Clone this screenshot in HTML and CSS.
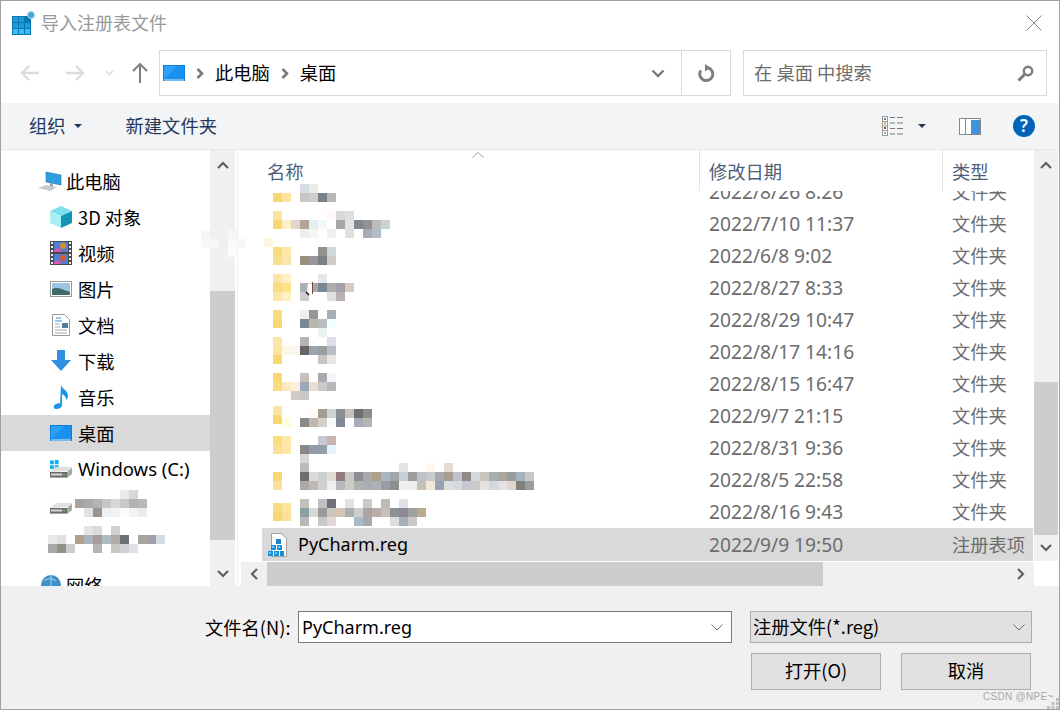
FILE: index.html
```html
<!DOCTYPE html>
<html lang="zh-CN">
<head>
<meta charset="utf-8">
<title>导入注册表文件</title>
<link rel="stylesheet" href="styles.css">
</head>
<body>
<div class="window">
  <header class="titlebar">
    <svg class="title-icon" width="24" height="24" viewBox="0 0 24 24"><rect x="0" y="5" width="19" height="19" fill="#0b76b4"/><g fill="#1d9ad8"><rect x="1" y="6" width="5" height="5"/><rect x="7" y="6" width="5" height="5"/><rect x="1" y="12" width="5" height="5"/><rect x="7" y="12" width="5" height="5"/><rect x="13" y="12" width="5" height="5"/></g><g fill="#36bdf2"><rect x="1" y="18" width="5" height="5"/><rect x="7" y="18" width="5" height="5"/><rect x="13" y="18" width="5" height="5"/></g><circle cx="19" cy="4" r="3.500" fill="#45a6d8" stroke="#a8d8ee"/></svg>
    <span class="title-text">导入注册表文件</span>
    <svg class="close" width="16" height="16" viewBox="0 0 16 16"><path d="M.5.5l15 15M15.5.5l-15 15" stroke="#8a8a8a" fill="none"/></svg>
  </header>

  <nav class="navbar">
    <svg class="nav-back" width="19" height="16" viewBox="0 0 19 16"><path d="M9 1L2 8l7 7M2 8h17" stroke="#dcdcdc" stroke-width="2.400" fill="none"/></svg>
    <svg class="nav-fwd" width="19" height="16" viewBox="0 0 19 16"><path d="M10 1l7 7-7 7M17 8H0" stroke="#dcdcdc" stroke-width="2.400" fill="none"/></svg>
    <svg class="nav-drop" width="9" height="6" viewBox="0 0 9 6"><path d="M1 1l3.500 3.500L8 1" stroke="#dcdcdc" stroke-width="1.600" fill="none"/></svg>
    <svg class="nav-up" width="16" height="20" viewBox="0 0 16 20"><path d="M1 8l7-7 7 7M8 1v19" stroke="#7f7f7f" stroke-width="2" fill="none"/></svg>
    <div class="address">
      <svg class="addr-icon" width="22" height="16" viewBox="0 0 22 16"><use href="#desk"/></svg>
      <svg class="crumb-sep" width="8" height="11" viewBox="0 0 8 11"><path d="M1.500 1l4.500 4.500L1.500 10" stroke="#7a7a7a" stroke-width="2.600" fill="none"/></svg>
      <span class="crumb">此电脑</span>
      <svg class="crumb-sep" width="8" height="11" viewBox="0 0 8 11"><path d="M1.500 1l4.500 4.500L1.500 10" stroke="#7a7a7a" stroke-width="2.600" fill="none"/></svg>
      <span class="crumb">桌面</span>
      <svg class="addr-chev" width="14" height="9" viewBox="0 0 14 9"><path d="M1.500 1.500L7 7l5.500-5.500" stroke="#7a7a7a" stroke-width="2.400" fill="none"/></svg>
      <div class="addr-refresh">
        <svg width="17" height="18" viewBox="0 0 17 18"><path d="M10 3.800A6.500 6.500 0 1 1 2.800 6.500" stroke="#7f7f7f" stroke-width="3" fill="none"/><path d="M7 0l5.500 3.800L7 7.500z" fill="#7f7f7f"/></svg>
      </div>
    </div>
    <div class="search">
      <span class="search-text">在 桌面 中搜索</span>
      <svg width="17" height="17" viewBox="0 0 17 17"><circle cx="11" cy="6" r="4.200" stroke="#7a7a7a" stroke-width="2.400" fill="none"/><path d="M7.500 9.500L1.500 15.500" stroke="#7a7a7a" stroke-width="3"/></svg>
    </div>
  </nav>

  <div class="toolbar">
    <span class="tool">组织</span><i class="caret"></i>
    <span class="tool tool-new">新建文件夹</span>
    <svg class="views" width="22" height="20" viewBox="0 0 22 20"><rect x=".5" y=".5" width="5" height="19" fill="#fff" stroke="#9a9a9a"/><path d="M1 5.500h4M1 10h4M1 14.500h4" stroke="#9a9a9a"/><rect x="2" y="2" width="2" height="2" fill="#4a7fb0"/><rect x="2" y="6.500" width="2" height="2" fill="#b8a040"/><rect x="2" y="11" width="2" height="2" fill="#b03020"/><rect x="2" y="16" width="2" height="2" fill="#a0a0a0"/><path d="M8 1.500h5M15 1.500h6M8 7h5M15 7h6M8 12.500h5M15 12.500h6M8 18h5M15 18h6" stroke="#777"/></svg>
    <i class="caret caret-views"></i>
    <svg class="pane" width="22" height="17" viewBox="0 0 22 17"><rect x=".5" y=".5" width="21" height="16" fill="#fff" stroke="#8a8a8a"/><rect x="12" y="2" width="9" height="14" fill="#3f92dc"/><path d="M6.500 1v15" stroke="#8a8a8a"/></svg>
    <svg class="help" width="22" height="22" viewBox="0 0 22 22"><circle cx="11" cy="11" r="11" fill="#0063b8"/><text x="11" y="17" class="help-q">?</text></svg>
  </div>

  <main class="content">
    <aside class="tree">
      <div class="tree-item tree-root"><svg class="ti" width="24" height="20" viewBox="0 0 24 20"><path d="M8 1l15 3v10L8 11z" fill="#2ea0e0" stroke="#1a78b0" stroke-width=".6"/><path d="M0 17l8-3 11 2-7 4z" fill="#c8ccd0"/><path d="M12 12l3 .6v3l-3-.4z" fill="#9aa4aa"/></svg><span>此电脑</span></div>
      <div class="tree-item"><svg class="ti" width="22" height="22" viewBox="0 0 22 22"><path d="M0 5l11 5 11-5-11-5z" fill="#7fe0ee"/><path d="M0 5l11 5v12L0 17z" fill="#a8eef2"/><path d="M11 10l11-5v12l-11 5z" fill="#1296b8"/></svg><span>3D 对象</span></div>
      <div class="tree-item"><svg class="ti" width="22" height="24" viewBox="0 0 22 24"><rect width="22" height="24" fill="#4a4a4a"/><rect x="4" y="1" width="14" height="10" fill="#4f7fd0"/><rect x="4" y="13" width="14" height="10" fill="#4f7fd0"/><circle cx="13" cy="5" r="3" fill="#e08a30"/><circle cx="13" cy="17" r="3" fill="#d85a30"/><path d="M4 9l4-2 3 2v2H4zM4 21l4-2 3 2v2H4z" fill="#d85ab0"/><path d="M1 2h2M1 6h2M1 10h2M1 14h2M1 18h2M1 22h2M19 2h2M19 6h2M19 10h2M19 14h2M19 18h2M19 22h2" stroke="#eee" stroke-width="2"/></svg><span>视频</span></div>
      <div class="tree-item"><svg class="ti" width="22" height="16" viewBox="0 0 22 16"><rect x=".5" y=".5" width="21" height="15" fill="#fff" stroke="#9a9a9a"/><rect x="2" y="2" width="18" height="12" fill="#9cc4e4"/><path d="M2 8c4-2 8-1 12 1l6 2v3H2z" fill="#3f6a66"/></svg><span>图片</span></div>
      <div class="tree-item"><svg class="ti" width="22" height="22" viewBox="0 0 22 22"><path d="M2.500.5h12l5 5v16h-17z" fill="#fff" stroke="#9a9a9a"/><path d="M6 4h5M5 7h7" stroke="#2a9ae0" stroke-width="1.200"/><rect x="12" y="9" width="6" height="5" fill="#4a7fa0"/><path d="M5 10h5M5 13h5M5 16h12M5 19h12" stroke="#aaa"/></svg><span>文档</span></div>
      <div class="tree-item"><svg class="ti" width="20" height="22" viewBox="0 0 20 22"><path d="M6 0h8v10h6L10 21 0 10h6z" fill="#2f8fe0"/></svg><span>下载</span></div>
      <div class="tree-item"><svg class="ti" width="18" height="24" viewBox="0 0 18 24"><path d="M9 0c1 4 7 5 7 11 0 2-1 3-2 4 .5-3-2-5-4-6v11c0 2.500-3 4-6 4s-3-4 0-5c2-1 3-.8 4-.3z" fill="#1a96e8"/></svg><span>音乐</span></div>
      <div class="tree-item selected"><svg class="ti" width="22" height="16" viewBox="0 0 22 16"><use href="#desk"/></svg><span>桌面</span></div>
      <div class="tree-item"><svg class="ti" width="22" height="18" viewBox="0 0 22 18"><path d="M0 .5h3.800v3.800H0zM4.800 0h3.800v4.300H4.800zM0 5.300h3.800v3.800H0zM4.800 5.300h3.800v4.200H4.800z" fill="#12b0f0"/><use href="#drive"/></svg><span class="latin latin-drive">Windows (C:)</span></div>
      <div class="tree-item"><svg class="ti" width="22" height="18" viewBox="0 0 22 18"><use href="#drive"/></svg></div>
      <div class="tree-item"></div>
      <div class="tree-item tree-net"><svg class="ti" width="24" height="24" viewBox="0 0 24 24"><circle cx="13" cy="12" r="10" fill="#3f8fc8"/><path d="M6 8c4-3 8-3 12 0M13 2v20" stroke="#a8d4ee" fill="none"/><path d="M0 20l10-3 6 3-6 3z" fill="#c8ccd0"/></svg><span>网络</span></div>
    </aside>

    <div class="vscroll">
      <div class="sb-arrow sb-top"><svg width="12" height="8" viewBox="0 0 12 8"><path d="M1 7l5-5 5 5" stroke="#606060" stroke-width="2.200" fill="none"/></svg></div>
      <div class="sb-gap-left"></div>
      <div class="sb-thumb sb-thumb-left"></div>
      <div class="sb-fill"></div>
      <div class="sb-arrow sb-bottom"><svg width="12" height="8" viewBox="0 0 12 8"><path d="M1 1l5 5 5-5" stroke="#606060" stroke-width="2.200" fill="none"/></svg></div>
    </div>
    <div class="divider"></div>

    <section class="list">
      <div class="list-main">
        <div class="list-head">
          <div class="col-name"><span>名称</span><svg class="sort" width="12" height="6" viewBox="0 0 12 6"><path d="M.5 5.500L6 .5l5.500 5" stroke="#9a9a9a" fill="none"/></svg></div>
          <div class="col-date">修改日期</div>
          <div class="col-type">类型</div>
        </div>
        <div class="rows">
          <div class="row row-clip"><span class="name"></span><span class="date">2022/8/26 8:26</span><span class="type">文件夹</span></div>
          <div class="row"><span class="name"></span><span class="date">2022/7/10 11:37</span><span class="type">文件夹</span></div>
          <div class="row"><span class="name"></span><span class="date">2022/6/8 9:02</span><span class="type">文件夹</span></div>
          <div class="row"><span class="name"></span><span class="date">2022/8/27 8:33</span><span class="type">文件夹</span></div>
          <div class="row"><span class="name"></span><span class="date">2022/8/29 10:47</span><span class="type">文件夹</span></div>
          <div class="row"><span class="name"></span><span class="date">2022/8/17 14:16</span><span class="type">文件夹</span></div>
          <div class="row"><span class="name"></span><span class="date">2022/8/15 16:47</span><span class="type">文件夹</span></div>
          <div class="row"><span class="name"></span><span class="date">2022/9/7 21:15</span><span class="type">文件夹</span></div>
          <div class="row"><span class="name"></span><span class="date">2022/8/31 9:36</span><span class="type">文件夹</span></div>
          <div class="row"><span class="name"></span><span class="date">2022/8/5 22:58</span><span class="type">文件夹</span></div>
          <div class="row"><span class="name"></span><span class="date">2022/8/16 9:43</span><span class="type">文件夹</span></div>
          <div class="row row-selected">
            <span class="name"><svg class="file-icon" width="20" height="24" viewBox="0 0 20 24"><path d="M3.500.5h10l5 5v18h-15z" fill="#fff" stroke="#a0a0a0"/><path d="M8 6h5v5H8z" fill="#1d86c8"/><path d="M3 12h5v5H3zM9 12h5v5H9zM0 18h5v5H0zM6 18h5v5H6zM12 18h4v5h-4z" fill="#1590d8"/><path d="M4 13h2v2H4zM10 13h2v2h-2zM1 19h2v2H1zM7 19h2v2H7z" fill="#6cc8f4"/></svg><span class="latin file-name">PyCharm.reg</span></span>
            <span class="date">2022/9/9 19:50</span><span class="type">注册表项</span>
          </div>
        </div>
        <div class="hscroll">
          <div class="hs-arrow"><svg width="8" height="12" viewBox="0 0 8 12"><path d="M7 1L2 6l5 5" stroke="#606060" stroke-width="2.200" fill="none"/></svg></div>
          <div class="hs-thumb"></div>
          <div class="hs-arrow hs-right"><svg width="8" height="12" viewBox="0 0 8 12"><path d="M1 1l5 5-5 5" stroke="#606060" stroke-width="2.200" fill="none"/></svg></div>
        </div>
      </div>
      <div class="vscroll vscroll-list">
        <div class="sb-arrow sb-top"><svg width="12" height="8" viewBox="0 0 12 8"><path d="M1 7l5-5 5 5" stroke="#606060" stroke-width="2.200" fill="none"/></svg></div>
        <div class="sb-gap-right"></div>
        <div class="sb-thumb sb-thumb-right"></div>
        <div class="sb-fill"></div>
        <div class="sb-arrow sb-bottom-right"><svg width="12" height="8" viewBox="0 0 12 8"><path d="M1 1l5 5 5-5" stroke="#606060" stroke-width="2.200" fill="none"/></svg></div>
      </div>
    </section>
  </main>

  <footer class="footer">
    <div class="foot-row">
      <label class="foot-label">文件名(N):</label>
      <div class="input"><span class="latin">PyCharm.reg</span><svg width="12" height="7" viewBox="0 0 12 7"><path d="M.5.500L6 6l5.500-5.500" stroke="#707070" fill="none"/></svg></div>
      <div class="combo"><span class="combo-text">注册文件(*.reg)</span><svg width="12" height="7" viewBox="0 0 12 7"><path d="M.5.500L6 6l5.500-5.500" stroke="#707070" fill="none"/></svg></div>
    </div>
    <div class="foot-row foot-actions">
      <button class="btn">打开(O)</button>
      <button class="btn">取消</button>
    </div>
  </footer>

  <svg class="mosaic" width="1060" height="710" viewBox="0 0 1060 710" aria-hidden="true">
    <defs>
      <g id="desk"><rect width="22" height="16" fill="#0a7ed8"/><rect x="1" y="1" width="20" height="13" fill="#2ba2f8"/><path d="M1 14L14 1h7v13z" fill="#1a90f0"/><rect x="1" y="14.500" width="20" height="1" fill="#e8f4ff"/></g>
      <g id="drive"><path d="M0 12l6-5h16v4l-6 0z" fill="#e0e0e0"/><path d="M0 12h17l5-4v6l-5 4H0z" fill="#a8a8a8"/><rect y="12" width="17" height="5" fill="#6a6a6a"/><rect x="1" y="13.500" width="11" height="2" fill="#d8d8d8"/><rect x="13" y="14" width="2" height="1.500" fill="#6ad050"/></g>
    </defs>
    <g class="blot"><rect x="201" y="230" fill="#f6f6f6"/><rect x="210" y="239" fill="#f7f7f7"/><rect x="201" y="239" fill="#f8f8f8"/><rect x="228" y="230" fill="#f6f6f6"/><rect x="228" y="239" fill="#f9f9f9"/><rect x="237" y="239" fill="#f7f7f7"/><rect x="228" y="248" fill="#fbfbfb"/></g>
    <g class="cells">
      <rect x="273" y="193" fill="#f8d775"/><rect x="282" y="193" fill="#fde69b"/><rect x="300" y="184" fill="#d5dce4"/><rect x="309" y="184" fill="#eaeae6"/><rect x="300" y="193" fill="#c9c5c6"/><rect x="309" y="193" fill="#ccccca"/><rect x="318" y="193" fill="#77808a"/><rect x="327" y="193" fill="#b9b5b6"/>
      <rect x="273" y="211" fill="#fde69b"/><rect x="273" y="220" fill="#f8d775"/><rect x="282" y="220" fill="#fdf0c5"/><rect x="291" y="220" fill="#e2d6cc"/><rect x="327" y="211" fill="#fff8f4"/><rect x="336" y="211" fill="#d8d8d8"/><rect x="345" y="211" fill="#dcdfe3"/><rect x="300" y="220" fill="#b3a596"/><rect x="309" y="220" fill="#e0f0f0"/><rect x="318" y="220" fill="#f3f7fa"/><rect x="336" y="220" fill="#a5a7a7"/><rect x="345" y="220" fill="#e3e3e0"/><rect x="354" y="220" fill="#7f8890"/><rect x="363" y="220" fill="#96908e"/><rect x="372" y="220" fill="#bcbdba"/><rect x="381" y="220" fill="#c9d4d6"/><rect x="300" y="229" fill="#eeeeed"/><rect x="309" y="229" fill="#f7f4f2"/><rect x="327" y="229" fill="#f3f0ec"/><rect x="345" y="229" fill="#dfdfde"/><rect x="363" y="229" fill="#a9abb5"/><rect x="372" y="229" fill="#b0bcc8"/>
      <rect x="264" y="238" fill="#fff5df"/><rect x="273" y="247" fill="#f9dc80"/><rect x="282" y="247" fill="#fde8a8"/><rect x="273" y="256" fill="#f9dd8f"/><rect x="282" y="256" fill="#fce5a8"/><rect x="318" y="247" fill="#93918c"/><rect x="327" y="247" fill="#ced6de"/><rect x="300" y="256" fill="#9a9082"/><rect x="309" y="256" fill="#99959c"/><rect x="318" y="256" fill="#7c7f84"/><rect x="327" y="256" fill="#cfccc7"/>
      <rect x="282" y="274" fill="#fff0c4"/><rect x="273" y="283" fill="#f9dc80"/><rect x="282" y="283" fill="#fde18c"/><rect x="273" y="274" fill="#fbe6a8"/><rect x="273" y="292" fill="#fbe6a8"/><rect x="282" y="292" fill="#fff0c4"/><rect x="318" y="274" fill="#e3e7ec"/><rect x="300" y="283" fill="#abb0b3"/><rect x="309" y="283" fill="#a9a6a6"/><rect x="318" y="283" fill="#7a8794"/><rect x="327" y="283" fill="#adacac"/><rect x="336" y="283" fill="#a3a1a5"/><rect x="345" y="283" fill="#d9cbbf"/><rect x="300" y="292" fill="#cdcdcd"/><rect x="327" y="292" fill="#e0e0df"/><rect x="336" y="292" fill="#b8b0b5"/>
      <rect x="273" y="310" fill="#f9dc80"/><rect x="273" y="319" fill="#f8d775"/><rect x="300" y="310" fill="#eeeeee"/><rect x="309" y="310" fill="#969696"/><rect x="327" y="310" fill="#a5afba"/><rect x="300" y="319" fill="#7a8896"/><rect x="309" y="319" fill="#bbb6ac"/><rect x="318" y="319" fill="#b8bebf"/><rect x="327" y="319" fill="#f0ffff"/><rect x="318" y="328" fill="#e9f2f1"/>
      <rect x="273" y="337" fill="#fbe6a8"/><rect x="273" y="346" fill="#fde69b"/><rect x="282" y="346" fill="#fff7e6"/><rect x="291" y="346" fill="#fbf8f4"/><rect x="273" y="355" fill="#f8d775"/><rect x="300" y="337" fill="#b4b4b4"/><rect x="327" y="337" fill="#dfdde9"/><rect x="300" y="346" fill="#666666"/><rect x="309" y="346" fill="#9aa4ae"/><rect x="318" y="346" fill="#979f9f"/><rect x="327" y="346" fill="#b7bfc3"/><rect x="318" y="355" fill="#c7c5c4"/><rect x="327" y="355" fill="#e6e6e2"/>
      <rect x="273" y="373" fill="#f8d775"/><rect x="273" y="382" fill="#f9dc80"/><rect x="282" y="382" fill="#fde9c0"/><rect x="291" y="382" fill="#fdeedd"/><rect x="300" y="373" fill="#c8c0ba"/><rect x="318" y="373" fill="#aaaaaa"/><rect x="327" y="373" fill="#f2f5fb"/><rect x="300" y="382" fill="#9ba8ba"/><rect x="309" y="382" fill="#ecdfd0"/><rect x="318" y="382" fill="#c7cbc9"/><rect x="327" y="382" fill="#b8b8b4"/><rect x="291" y="391" fill="#d0cbc8"/><rect x="300" y="391" fill="#c9c9c6"/>
      <rect x="273" y="406" fill="#fbe6a8"/><rect x="273" y="415" fill="#f8d775"/><rect x="282" y="418" fill="#fffbe0"/><rect x="309" y="409" fill="#fffbf5"/><rect x="318" y="409" fill="#a59e93"/><rect x="327" y="409" fill="#cbd6d3"/><rect x="336" y="409" fill="#8b8f94"/><rect x="345" y="409" fill="#c9c2bb"/><rect x="354" y="409" fill="#6f6f6f"/><rect x="363" y="409" fill="#8a8e8a"/><rect x="300" y="418" fill="#8a8a8a"/><rect x="309" y="418" fill="#c0b6ae"/><rect x="318" y="418" fill="#d3d2cb"/><rect x="327" y="418" fill="#f6fbfd"/><rect x="336" y="418" fill="#818a96"/><rect x="354" y="418" fill="#a5abb9"/><rect x="363" y="418" fill="#b4b5af"/>
      <rect x="273" y="436" fill="#f9dc80"/><rect x="282" y="436" fill="#fde8a8"/><rect x="273" y="445" fill="#fbe09a"/><rect x="282" y="445" fill="#fde8a8"/><rect x="318" y="436" fill="#c8c7cf"/><rect x="327" y="436" fill="#c8b3b3"/><rect x="300" y="445" fill="#8a868a"/><rect x="309" y="445" fill="#8f9bac"/><rect x="318" y="445" fill="#959da8"/><rect x="327" y="445" fill="#e6f4fd"/><rect x="300" y="454" fill="#d8d5d9"/>
      <rect x="273" y="472" fill="#f8d775"/><rect x="273" y="481" fill="#fbe09a"/><rect x="300" y="463" fill="#c0bab6"/><rect x="399" y="463" fill="#e3e3e1"/><rect x="426" y="463" fill="#fff8f2"/><rect x="444" y="463" fill="#e3dcd6"/>
      <rect x="300" y="472" fill="#6e6e6e"/><rect x="309" y="472" fill="#d8dbd6"/><rect x="318" y="472" fill="#ccd0cd"/><rect x="327" y="472" fill="#dfddd6"/><rect x="336" y="472" fill="#907c7c"/><rect x="345" y="472" fill="#c8c8c8"/><rect x="354" y="472" fill="#8b8c94"/><rect x="363" y="472" fill="#a9a9a9"/><rect x="372" y="472" fill="#ae9f8c"/><rect x="381" y="472" fill="#a7b7c2"/><rect x="390" y="472" fill="#a0a7ab"/><rect x="399" y="472" fill="#c8d0d5"/><rect x="408" y="472" fill="#9d9d9f"/><rect x="417" y="472" fill="#bcc2c6"/><rect x="426" y="472" fill="#c8cacc"/><rect x="435" y="472" fill="#a9a8ac"/><rect x="444" y="472" fill="#a79e92"/><rect x="453" y="472" fill="#c0c2d0"/><rect x="462" y="472" fill="#928888"/><rect x="471" y="472" fill="#d3d8de"/><rect x="480" y="472" fill="#c7c5c0"/><rect x="489" y="472" fill="#a6adad"/><rect x="498" y="472" fill="#aba5a0"/><rect x="507" y="472" fill="#979d9d"/><rect x="516" y="472" fill="#a5b5bf"/><rect x="525" y="472" fill="#cbc7c3"/>
      <rect x="300" y="481" fill="#b0a8a2"/><rect x="309" y="481" fill="#bcb8b2"/><rect x="318" y="481" fill="#d1d0d2"/><rect x="327" y="481" fill="#efefef"/><rect x="336" y="481" fill="#b8b7bd"/><rect x="345" y="481" fill="#cccbc0"/><rect x="354" y="481" fill="#b0b2b2"/><rect x="363" y="481" fill="#a6aeaf"/><rect x="372" y="481" fill="#aeb2b6"/><rect x="381" y="481" fill="#9a9aa8"/><rect x="390" y="481" fill="#8d918c"/><rect x="399" y="481" fill="#f0f0f0"/><rect x="408" y="481" fill="#f0eeea"/><rect x="417" y="481" fill="#c4c0bc"/><rect x="426" y="481" fill="#f5e6d5"/><rect x="435" y="481" fill="#94a4b4"/><rect x="444" y="481" fill="#dadfe0"/><rect x="453" y="481" fill="#d9dadb"/><rect x="462" y="481" fill="#c5c8d0"/><rect x="471" y="481" fill="#cbcac8"/><rect x="480" y="481" fill="#e6e3dc"/><rect x="489" y="481" fill="#d3d7e0"/><rect x="498" y="481" fill="#e2e2e4"/><rect x="507" y="481" fill="#e2d6c8"/><rect x="516" y="481" fill="#7f807a"/><rect x="525" y="481" fill="#999d9d"/>
      <rect x="273" y="503" fill="#f9dc80"/><rect x="273" y="512" fill="#f8d775"/><rect x="282" y="503" fill="#fde69b"/><rect x="282" y="512" fill="#fbe09a"/><rect x="300" y="499" fill="#c4c0bc"/><rect x="318" y="499" fill="#c0c0c0"/><rect x="327" y="499" fill="#707078"/><rect x="345" y="499" fill="#dfe1e8"/><rect x="363" y="499" fill="#cacaca"/><rect x="381" y="499" fill="#c0bab2"/><rect x="399" y="499" fill="#e0e0e6"/>
      <rect x="300" y="508" fill="#8b9fa5"/><rect x="309" y="508" fill="#d5d8d6"/><rect x="318" y="508" fill="#9a9a98"/><rect x="327" y="508" fill="#ccc6bc"/><rect x="336" y="508" fill="#d2c5b4"/><rect x="345" y="508" fill="#a8b0b0"/><rect x="354" y="508" fill="#cccecf"/><rect x="363" y="508" fill="#aaa6a4"/><rect x="372" y="508" fill="#bdabab"/><rect x="381" y="508" fill="#c5c1ba"/><rect x="390" y="508" fill="#8e9298"/><rect x="399" y="508" fill="#8c8896"/><rect x="408" y="508" fill="#9ea1a0"/><rect x="417" y="508" fill="#bbaa92"/><rect x="300" y="517" fill="#b8b8b4"/><rect x="318" y="517" fill="#c8c8c8"/><rect x="327" y="517" fill="#e0d8d4"/><rect x="354" y="517" fill="#a9bbc8"/><rect x="363" y="517" fill="#a8a6ae"/><rect x="390" y="517" fill="#dcdcdc"/><rect x="399" y="517" fill="#a5afb8"/><rect x="408" y="517" fill="#c8c8cc"/>
      <rect x="120" y="490" fill="#eaeaea"/><rect x="129" y="490" fill="#d8d8d4"/><rect x="75" y="499" fill="#a8a2a0"/><rect x="84" y="499" fill="#aaaaac"/><rect x="93" y="499" fill="#b2b4b6"/><rect x="102" y="499" fill="#c8c6c4"/><rect x="111" y="499" fill="#d4d8dc"/><rect x="120" y="499" fill="#c8c8c8"/><rect x="129" y="499" fill="#b6b0ae"/><rect x="138" y="499" fill="#b8b8bc"/><rect x="84" y="508" fill="#dfe3e8"/><rect x="93" y="508" fill="#9d948e"/><rect x="102" y="508" fill="#f0f0f0"/><rect x="111" y="508" fill="#f3f3f3"/><rect x="120" y="508" fill="#fbfbf8"/><rect x="129" y="508" fill="#f0f4f6"/><rect x="138" y="508" fill="#ebebe8"/>
      <rect x="84" y="526" fill="#e2e4e8"/><rect x="93" y="526" fill="#dcdad8"/><rect x="111" y="526" fill="#d0d0d0"/><rect x="48" y="535" fill="#e8e8e8"/><rect x="57" y="535" fill="#e0e0e0"/><rect x="75" y="535" fill="#b0a08c"/><rect x="84" y="535" fill="#a8b4be"/><rect x="93" y="535" fill="#a89a9c"/><rect x="102" y="535" fill="#aebcc4"/><rect x="111" y="535" fill="#aeaca4"/><rect x="120" y="535" fill="#6c7074"/><rect x="138" y="535" fill="#a8a4a0"/><rect x="147" y="535" fill="#a0a0aa"/><rect x="156" y="535" fill="#d4dce2"/><rect x="48" y="544" fill="#a8a8a8"/><rect x="57" y="544" fill="#8c948a"/><rect x="66" y="544" fill="#cccccc"/><rect x="93" y="544" fill="#b8b4b0"/><rect x="111" y="544" fill="#c8c8c4"/><rect x="120" y="544" fill="#d0d0d4"/><rect x="129" y="544" fill="#dfe2e6"/>
    </g>
    <path d="M308 283l5 1-1 12-5-3z" fill="#fff"/><path d="M306 292l3 3" stroke="#111" stroke-width="1.500"/><path d="M312.500 282v12" stroke="#7a4a3a"/>
  </svg>

  <span class="watermark">CSDN @NPE~</span>
  <svg class="grip" width="12" height="11" viewBox="0 0 12 11"><path d="M9 0h3v3H9zM4.500 4h3v3h-3zM9 4h3v3H9zM0 8h3v3H0zM4.500 8h3v3h-3zM9 8h3v3H9z" fill="#c0c0c0"/></svg>
</div>
</body>
</html>
```

FILE: styles.css
```css
* { box-sizing: border-box; }
html, body { margin: 0; padding: 0; }
body {
  width: 1060px;
  height: 710px;
  overflow: hidden;
  background: #fff;
  font-family: "Noto Sans CJK SC", "Noto Sans", sans-serif;
  font-size: 18.3px;
  color: #000;
}
svg { display: block; flex: none; }

.window {
  position: relative;
  width: 1060px;
  height: 710px;
  border: 1px solid #a0a0a0;
  display: flex;
  flex-direction: column;
  overflow: hidden;
  background: #fff;
}

.latin { font-family: "Noto Sans", "Noto Sans CJK SC", sans-serif; font-size: 18px; }
.latin-drive { font-size: 18.5px; }

/* title bar */
.titlebar { height: 44px; flex: none; display: flex; align-items: center; padding-left: 11px; padding-right: 17px; }
.title-text { margin-left: 5px; color: #9a9a9a; font-size: 18px; padding-bottom: 2px; }
.close { margin-left: auto; }

/* navigation */
.navbar { height: 58px; flex: none; display: flex; align-items: flex-start; padding-top: 5px; padding-left: 19px; }
.navbar > svg { margin-top: 15px; }
.nav-fwd { margin-left: 27px; }
.nav-drop { margin-left: 20px; margin-top: 20px !important; }
.nav-up { margin-left: 18px; margin-top: 13px !important; }
.address {
  width: 572px; height: 46px; margin-left: 11px;
  border: 1px solid #d9d9d9;
  display: flex; align-items: center; padding-left: 3px;
}
.addr-icon { margin-right: 11px; }
.crumb { margin: 0 11px 0 11px; line-height: 42px; padding-bottom: 2px; }
.addr-chev { margin-left: auto; margin-right: 16px; }
.addr-refresh { width: 49px; height: 44px; border-left: 1px solid #d9d9d9; display: flex; align-items: center; justify-content: center; }
.search {
  width: 304px; height: 46px; margin-left: 12px;
  border: 1px solid #d9d9d9;
  display: flex; align-items: center; justify-content: space-between;
  padding: 0 12px 0 10px;
  color: #6d6d6d;
}
.search-text { padding-bottom: 2px; }

/* toolbar */
.toolbar { height: 47px; flex: none; background: #f3f4f6; display: flex; align-items: center; padding-left: 28px; color: #1e395b; border-bottom: 1px solid #e8e8e8; }
.tool { padding-bottom: 2px; }
.caret { width: 0; height: 0; border: 4px solid transparent; border-top: 4px solid #1e395b; border-bottom: 0; margin-left: 8px; }
.tool-new { margin-left: 44px; }
.views { margin-left: auto; }
.caret-views { margin-left: 14px; }
.pane { margin-left: 33px; }
.help { margin-left: 32px; margin-right: 24px; }
.help-q { fill: #fff; font: 600 17px "Noto Sans", sans-serif; text-anchor: middle; }

/* content */
.content { height: 436px; flex: none; display: flex; overflow: hidden; }
.tree { width: 209px; flex: none; padding-top: 13px; overflow: hidden; }
.tree-item { height: 36px; display: flex; align-items: center; padding-left: 49px; }
.tree-item > span { padding-bottom: 1px; }
.tree-item .ti { margin-right: 6px; }
.tree-item > svg { width: 22px; }
.tree-root { padding-left: 37px; }
.tree-root > svg { width: 24px; }
.tree-root .ti { margin-right: 4px; }
.tree-net { margin-top: 8px; padding-left: 37px; }
.tree-net > svg { width: 24px; }
.tree-net .ti { margin-right: 4px; }
.selected { background: #d9d9d9; }

.vscroll { width: 25px; flex: none; background: #f0f0f0; display: flex; flex-direction: column; }
.sb-arrow { display: flex; align-items: center; justify-content: center; flex: none; }
.sb-top { height: 30px; }
.sb-bottom { height: 24px; }
.sb-gap-left { height: 111px; flex: none; }
.sb-thumb { background: #cdcdcd; flex: none; }
.sb-thumb-left { height: 249px; }
.sb-fill { flex: 1; }
.divider { width: 6px; flex: none; position: relative; border-left: 2px solid #fff; border-right: 3px solid #fff; background: #f0f0f0; }

.list { flex: 1; display: flex; min-width: 0; }
.list-main { width: 793px; flex: none; display: flex; flex-direction: column; }
.vscroll-list { width: 24px; height: 411px; }
.sb-gap-right { height: 202px; flex: none; }
.sb-thumb-right { height: 153px; }
.sb-bottom-right { height: 26px; }

.list-head { height: 41px; flex: none; display: flex; color: #4c607a; }
.col-name { width: 459px; padding-left: 26px; padding-top: 8px; border-right: 1px solid #e5e5e5; position: relative; }
.sort { position: absolute; left: 231px; top: 2px; }
.col-date { width: 243px; padding-left: 9px; padding-top: 8px; border-right: 1px solid #e5e5e5; }
.col-type { padding-left: 9px; padding-top: 8px; }

.rows { height: 370px; flex: none; padding-left: 21px; overflow: hidden; }
.row { height: 32px; display: flex; align-items: center; color: #6d6d6d; margin-right: 1px; }
.row-clip { height: 17px; align-items: flex-end; overflow: hidden; }
.row-selected { height: 33px; background: #d9d9d9; color: #6d6d6d; }
.name { width: 447px; flex: none; display: flex; align-items: center; padding-left: 6px; color: #000; }
.file-icon { margin-right: 10px; }
.file-name { padding-bottom: 2px; }
.date { width: 243px; flex: none; font-family: "Noto Sans", sans-serif; font-size: 19.2px; line-height: 32px; }
.type { line-height: 30px; padding-bottom: 2px; }

.hscroll { height: 24px; margin-top: 1px; flex: none; background: #f0f0f0; display: flex; }
.hs-arrow { width: 26px; flex: none; display: flex; align-items: center; justify-content: center; }
.hs-thumb { width: 556px; background: #cdcdcd; flex: none; }
.hs-right { margin-left: auto; }

/* footer */
.footer { flex: 1; background: #f0f0f0; padding-top: 25px; display: flex; flex-direction: column; gap: 10px; }
.foot-row { display: flex; align-items: center; }
.foot-label { width: 86px; margin-left: 204px; white-space: nowrap; }
.input { width: 434px; height: 32px; margin-left: 7px; background: #fff; border: 1px solid #7a7a7a; display: flex; align-items: center; justify-content: space-between; padding: 0 8px 0 3px; }
.combo { width: 282px; height: 32px; margin-left: 18px; background: #e1e1e1; border: 1px solid #adadad; display: flex; align-items: center; justify-content: space-between; padding: 0 6px 0 2px; }
.combo-text { padding-bottom: 2px; }
.foot-actions { justify-content: flex-end; gap: 20px; padding-right: 28px; }
.btn { width: 130px; height: 37px; background: #e1e1e1; border: 1px solid #adadad; border-radius: 0; padding: 0 0 3px; font: 18.3px "Noto Sans CJK SC", "Noto Sans", sans-serif; color: #000; }

/* pixelated privacy mosaic lying over the list */
.mosaic { position: absolute; left: -1px; top: -1px; pointer-events: none; }
.mosaic .cells rect, .mosaic .blot rect { width: 9px; height: 9px; }
.watermark { position: absolute; left: 982px; top: 690px; font: 10px "Liberation Sans", sans-serif; color: #a8a8a8; letter-spacing: .3px; white-space: nowrap; }
.grip { position: absolute; left: 1046px; top: 697px; }
```
